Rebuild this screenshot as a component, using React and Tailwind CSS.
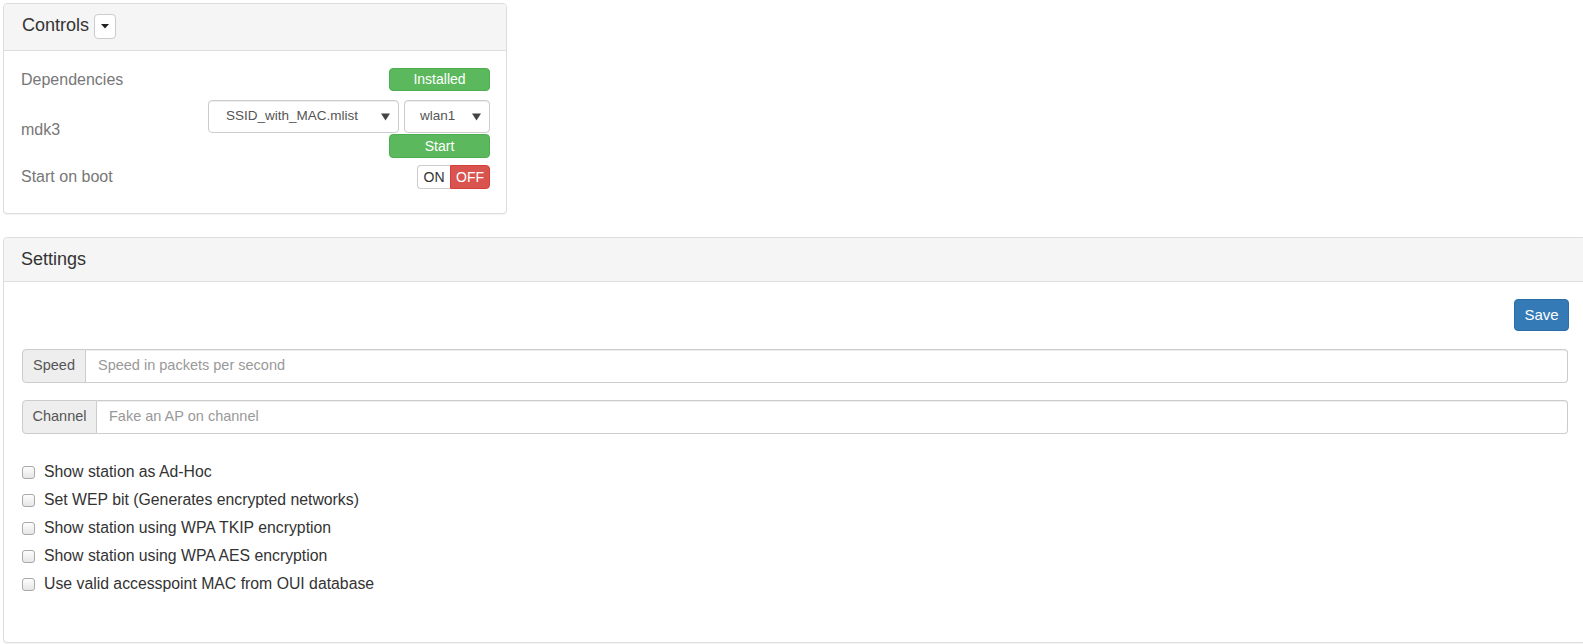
import React from "react";

const font = { fontFamily: '"Liberation Sans", Arial, sans-serif' };

function Select({ value, width, padLeft }) {
  return (
    <div
      className={`h-[33px] ${width} border border-[#ccc] rounded-[4px] bg-white flex items-center justify-between pr-[8px] shadow-[inset_0_1px_1px_rgba(0,0,0,0.075)]`}
      style={{ paddingLeft: padLeft }}
    >
      <span className="text-[13.5px] text-[#555]">{value}</span>
      <svg width="9" height="8" viewBox="0 0 9 8">
        <path d="M0 0.5 L9 0.5 L4.5 7.5 Z" fill="#444" />
      </svg>
    </div>
  );
}

function Checkbox({ label }) {
  return (
    <div className="flex items-center h-[28px]">
      <span className="w-[13px] h-[13px] rounded-[3px] border border-[#a9a9a9] bg-gradient-to-b from-[#fdfdfd] to-[#e6e6e6] ml-[18px]" />
      <span className="ml-[9px] text-[15.8px] text-[#333]">{label}</span>
    </div>
  );
}

function InputGroup({ label, placeholder, addonWidth }) {
  return (
    <div className="flex h-[34px] ml-[18px] mr-[17px]">
      <div
        className={`${addonWidth} shrink-0 bg-[#eee] border border-[#ccc] rounded-l-[4px] flex items-center justify-center text-[14.5px] text-[#555]`}
      >
        {label}
      </div>
      <div className="flex-1 border border-l-0 border-[#ccc] rounded-r-[4px] flex items-center pl-[12px] text-[14.5px] text-[#999] shadow-[inset_0_1px_1px_rgba(0,0,0,0.075)]">
        {placeholder}
      </div>
    </div>
  );
}

export default function App() {
  return (
    <div className="w-[1583px] h-[644px] overflow-hidden bg-white pl-[3px] pt-[3px]" style={font}>
      {/* Controls panel */}
      <div className="w-[504px] border border-[#ddd] rounded-[4px] shadow-[0_1px_1px_rgba(0,0,0,0.05)] bg-white">
        <div className="h-[47px] bg-[#f5f5f5] border-b border-[#ddd] rounded-t-[4px] flex items-center pl-[18px] pb-[2px]">
          <span className="text-[18px] text-[#333] mb-[2px]">Controls</span>
          <div className="ml-[5px] w-[22px] h-[25px] border border-[#ccc] rounded-[4px] bg-white flex items-center justify-center">
            <svg width="8" height="5" viewBox="0 0 8 5">
              <path d="M0 0 L8 0 L4 4.5 Z" fill="#222" />
            </svg>
          </div>
        </div>
        <div className="pl-[17px] pr-[16px] pt-[17px] pb-[24px] text-[16px] text-[#777]">
          <div className="flex items-center justify-between h-[23px]">
            <span>Dependencies</span>
            <div className="w-[101px] h-[23px] bg-[#5cb85c] border border-[#4cae4c] rounded-[4px] text-white text-[14px] flex items-center justify-center">
              Installed
            </div>
          </div>
          <div className="flex items-center justify-between mt-[9px]">
            <span className="mt-[1px]">mdk3</span>
            <div className="flex flex-col items-end">
              <div className="flex gap-[5px]">
                <Select value="SSID_with_MAC.mlist" width="w-[191px]" padLeft="17px" />
                <Select value="wlan1" width="w-[86px]" padLeft="15px" />
              </div>
              <div className="mt-[1px] w-[101px] h-[24px] bg-[#5cb85c] border border-[#4cae4c] rounded-[4px] text-white text-[14px] flex items-center justify-center">
                Start
              </div>
            </div>
          </div>
          <div className="flex items-center justify-between mt-[7px] h-[24px]">
            <span>Start on boot</span>
            <div className="flex h-[24px] text-[14px]">
              <div className="w-[33px] border border-[#ccc] border-r-0 rounded-l-[4px] bg-white text-[#333] flex items-center justify-center">
                ON
              </div>
              <div className="w-[40px] bg-[#d9534f] border border-[#d43f3a] rounded-r-[4px] text-white flex items-center justify-center">
                OFF
              </div>
            </div>
          </div>
        </div>
      </div>

      {/* Settings panel */}
      <div className="mt-[23px] w-[1583px] border border-[#ddd] rounded-[4px] shadow-[0_1px_1px_rgba(0,0,0,0.05)] bg-white h-[406px]">
        <div className="h-[44px] bg-[#f5f5f5] border-b border-[#ddd] rounded-t-[4px] flex items-center pl-[17px]">
          <span className="text-[18px] text-[#333]">Settings</span>
        </div>
        <div className="pt-[17px]">
          <div className="flex justify-end pr-[16px]">
            <div className="w-[55px] h-[32px] bg-[#337ab7] border border-[#2e6da4] rounded-[4px] text-white text-[15px] flex items-center justify-center">
              Save
            </div>
          </div>
          <div className="mt-[18px]">
            <InputGroup label="Speed" placeholder="Speed in packets per second" addonWidth="w-[64px]" />
          </div>
          <div className="mt-[17px]">
            <InputGroup label="Channel" placeholder="Fake an AP on channel" addonWidth="w-[75px]" />
          </div>
          <div className="mt-[24px]">
            <Checkbox label="Show station as Ad-Hoc" />
            <Checkbox label="Set WEP bit (Generates encrypted networks)" />
            <Checkbox label="Show station using WPA TKIP encryption" />
            <Checkbox label="Show station using WPA AES encryption" />
            <Checkbox label="Use valid accesspoint MAC from OUI database" />
          </div>
        </div>
      </div>
    </div>
  );
}
